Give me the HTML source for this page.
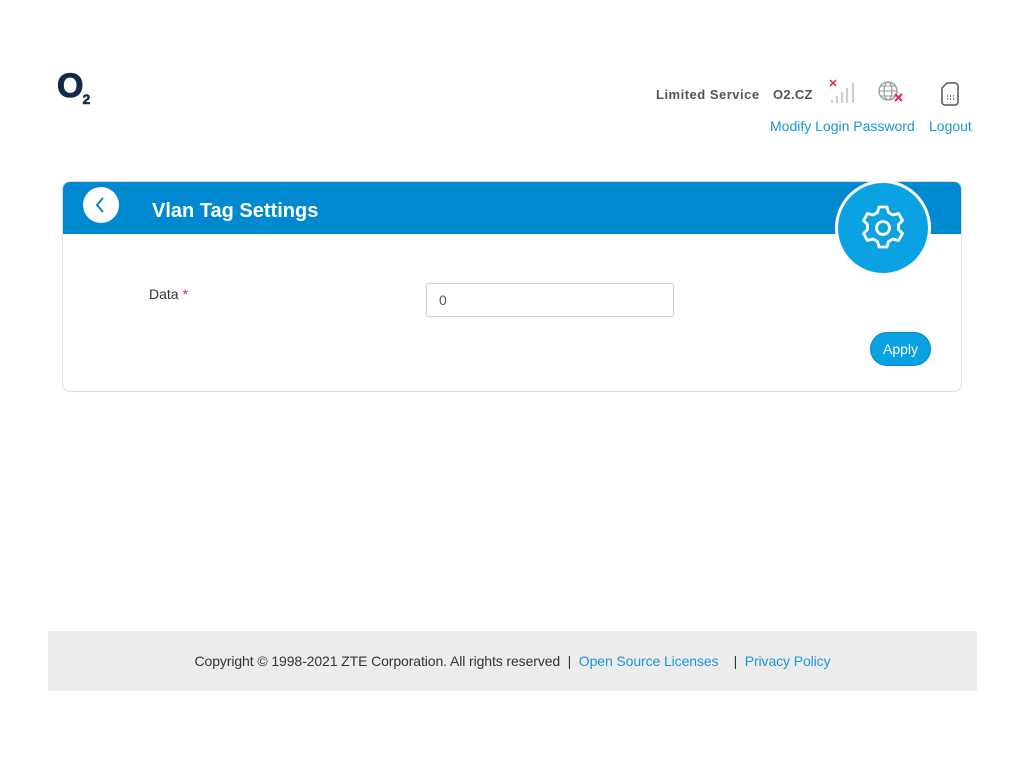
<!DOCTYPE html>
<html><head><meta charset="utf-8"><style>
*{box-sizing:border-box;margin:0;padding:0}
body{width:1024px;height:768px;background:#fff;font-family:"Liberation Sans",Arial,sans-serif;position:relative;overflow:hidden}
.abs{position:absolute}
a{color:#1a95d6;text-decoration:none}
</style></head><body>
<div class="abs" style="left:57px;top:67px;font-weight:bold;font-size:34px;color:#12284c;letter-spacing:-2px;-webkit-text-stroke:1px #12284c">O<span style="font-size:14px;position:relative;top:7px;left:1px;-webkit-text-stroke:0.5px #12284c">2</span></div>

<div class="abs" style="left:656px;top:87px;font-size:13px;font-weight:bold;color:#555;letter-spacing:0.5px">Limited Service</div>
<div class="abs" style="left:773px;top:87px;font-size:13px;font-weight:bold;color:#555;letter-spacing:0.3px">O2.CZ</div>
<svg class="abs" style="left:826px;top:78px" width="32" height="28" viewBox="0 0 32 28">
<path d="M4 2l6 6M10 2l-6 6" stroke="#e8203c" stroke-width="1.5"/>
<path d="M6 25v-3M11 25v-7M16 25v-11M21 25v-15M27 25v-20" stroke="#ccc" stroke-width="2.2"/>
</svg>
<svg class="abs" style="left:876px;top:79px" width="30" height="28" viewBox="0 0 30 28">
<circle cx="12" cy="12" r="9" fill="none" stroke="#999" stroke-width="1.3"/>
<ellipse cx="12" cy="12" rx="4" ry="9" fill="none" stroke="#999" stroke-width="1.2"/>
<path d="M3 12h18M5 7h14M5 17h14" stroke="#999" stroke-width="1.1"/>
<path d="M19 15l7 7M26 15l-7 7" stroke="#e8207c" stroke-width="2"/>
</svg>
<svg class="abs" style="left:940px;top:81px" width="20" height="26" viewBox="0 0 20 26">
<path d="M7 2h8a3 3 0 0 1 3 3v16a3 3 0 0 1-3 3H5a3 3 0 0 1-3-3V7z" fill="none" stroke="#555" stroke-width="1.5"/>
<path d="M7 15h1M10 15h1M13 15h1M7 18h1M10 18h1M13 18h1" stroke="#555" stroke-width="1.4"/>
</svg>
<div class="abs" style="left:770px;top:118px;font-size:14px"><a>Modify Login Password</a></div>
<div class="abs" style="left:929px;top:118px;font-size:14px"><a>Logout</a></div>

<div class="abs" style="left:62px;top:181px;width:900px;height:211px;border:1px solid #ddd;border-radius:8px;overflow:hidden">
 <div style="height:52px;background:#0089d0"></div>
</div>
<div class="abs" style="left:83px;top:187px;width:36px;height:36px;border-radius:50%;background:#fff"></div>
<svg class="abs" style="left:83px;top:187px" width="36" height="36"><path d="M20 11l-6 7 6 7" fill="none" stroke="#0089d0" stroke-width="2"/></svg>
<div class="abs" style="left:152px;top:200px;color:#fff;font-weight:bold;font-size:20px">Vlan Tag Settings</div>
<div class="abs" style="left:835px;top:180px;width:96px;height:96px;border-radius:50%;background:#fff"></div>
<div class="abs" style="left:838px;top:183px;width:90px;height:90px;border-radius:50%;background:#0aa2e2"></div>
<svg class="abs" style="left:858px;top:203px" width="50" height="50" viewBox="-25 -25 50 50">
<path d="M-4 -21h8l1.5 5.5 4.5 2.5 5.5-1.5 4 7-4 4v5l4 4-4 7-5.5-1.5-4.5 2.5-1.5 5.5h-8l-1.5-5.5-4.5-2.5-5.5 1.5-4-7 4-4v-5l-4-4 4-7 5.5 1.5 4.5-2.5z" fill="none" stroke="#fff" stroke-width="2.8" stroke-linejoin="round"/>
<circle r="6.5" fill="none" stroke="#fff" stroke-width="2.8"/>
</svg>

<div class="abs" style="left:149px;top:286px;font-size:14px;color:#333">Data <span style="color:#e8203c">*</span></div>
<div class="abs" style="left:426px;top:283px;width:248px;height:34px;border:1px solid #ccc;border-radius:3px;font-size:14px;color:#555;padding:8px 12px">0</div>
<div class="abs" style="left:870px;top:332px;width:61px;height:34px;border-radius:17px;background:#0aa2e2;border:1px solid #0a86c0;color:#fff;font-size:14px;text-align:center;line-height:32px">Apply</div>

<div class="abs" style="left:48px;top:631px;width:929px;height:60px;background:#ececec;font-size:14px;color:#333;text-align:center;line-height:60px;letter-spacing:-0.1px">Copyright © 1998-2021 ZTE Corporation. All rights reserved &nbsp;| &nbsp;<a>Open Source Licenses</a> &nbsp; &nbsp;| &nbsp;<a>Privacy Policy</a></div>
</body></html>
